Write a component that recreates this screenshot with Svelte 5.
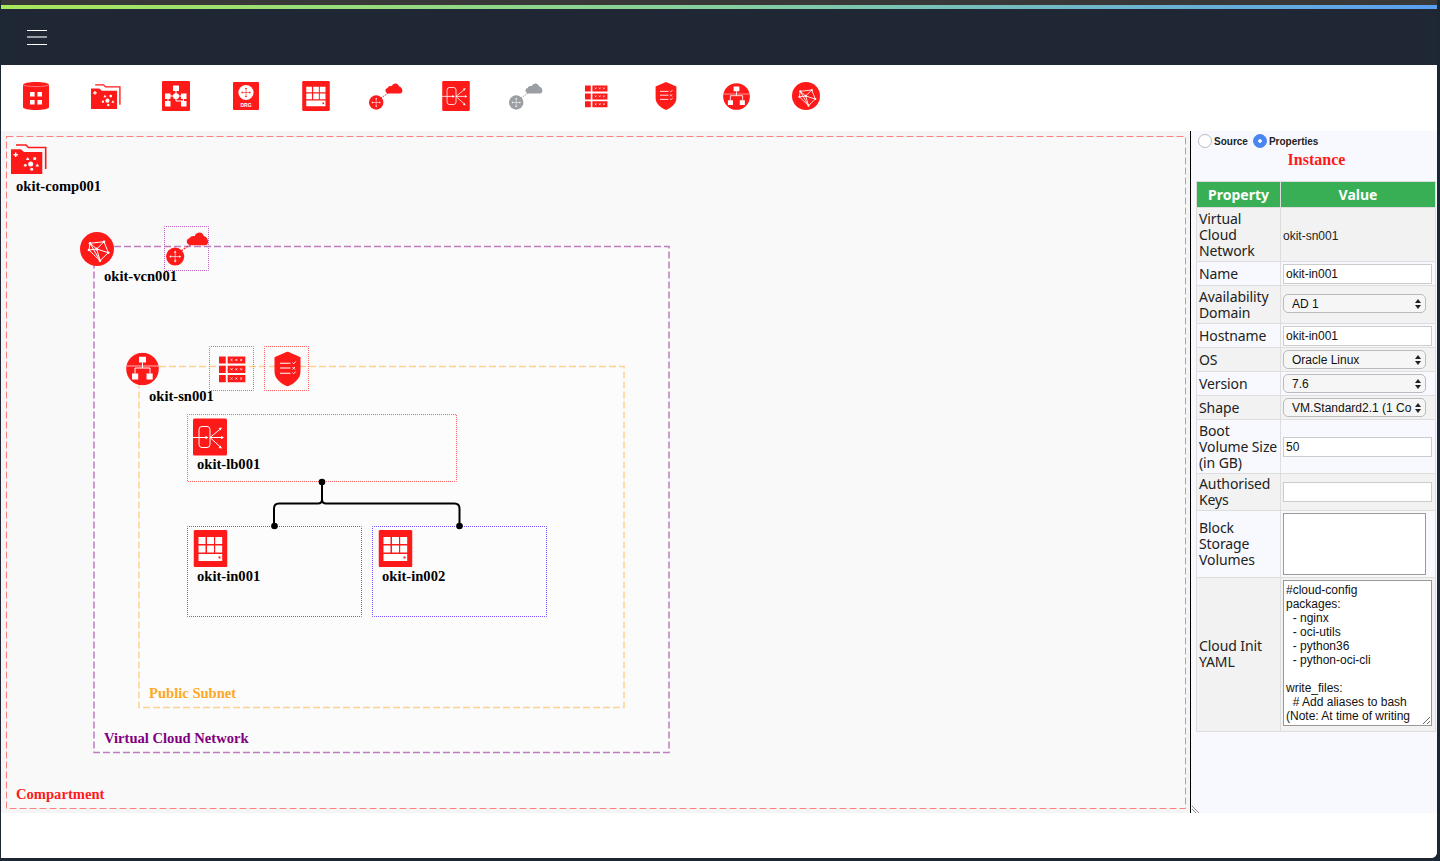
<script>
  // component palette, left to right
  const palette = [
    { id: 'db', w: 26, h: 28 },
    { id: 'folder', w: 30, h: 25 },
    { id: 'tree', w: 28, h: 30 },
    { id: 'drg', w: 26, h: 28 },
    { id: 'inst', w: 28, h: 30 },
    { id: 'ig', w: 34, h: 27, red: true },
    { id: 'lb', w: 28, h: 30 },
    { id: 'ig', w: 34, h: 27, grey: true },
    { id: 'route', w: 23, h: 23 },
    { id: 'shield', w: 22, h: 28 },
    { id: 'sub', w: 27, h: 27 },
    { id: 'vcn', w: 28, h: 28 }
  ];

  const cloudInit = `#cloud-config
packages:
  - nginx
  - oci-utils
  - python36
  - python-oci-cli

write_files:
  # Add aliases to bash
(Note: At time of writing the aliases are not added)
  - path: /etc/profile.d/aliases.sh
    content: |`;
</script>

<svg class="defs" width="0" height="0" aria-hidden="true">
  <defs>
    <symbol id="db" viewBox="0 0 26 28">
      <path fill="#ff1a1a" d="M0 3C0 1 6 0 13 0s13 1 13 3v22c0 2-6 3-13 3S0 27 0 25z" />
      <path fill="none" stroke="#ffb0b0" stroke-width=".6" d="M0 3c3 2 23 2 26 0" />
      <path fill="#fff" d="M7 10h4.600v4.600H7zM14.400 10H19v4.600h-4.600zM7 18h4.600v4.600H7zM14.400 18H19v4.600h-4.600z" />
    </symbol>

    <symbol id="folder" viewBox="0 0 36 30">
      <path fill="none" stroke="#ff1a1a" stroke-width="1.600" d="M5 1h10l2.500 2.500h17.200V25" />
      <path fill="#ff1a1a" d="M0 5.300h10L13 8h18.300v22H0z" />
      <path fill="#fff" d="M4 8.500h1.400V10h1.500v1.400H5.400v1.500H4v-1.500H2.500V10H4z" />
      <path fill="#fff" d="M16.700 13l1.800 3h-3.600zM26.300 19.500l1.800 3h-3.600z" />
      <circle fill="#fff" cx="23.700" cy="14.500" r="1.600" />
      <circle fill="#fff" cx="19.700" cy="20" r="2.500" />
      <circle fill="#fff" cx="14.300" cy="21.300" r="1.400" />
      <circle fill="#fff" cx="20.700" cy="25.300" r="1.500" />
    </symbol>

    <symbol id="tree" viewBox="0 0 28 30">
      <rect fill="#ff1a1a" width="28" height="30" rx="1" />
      <path fill="none" stroke="#fff" stroke-width="1" d="M14 7v8M6 15h16M6 15v8M21.500 15v8M14 15v5h7.500" />
      <path fill="#fff" d="M11 4.500h6v5.500h-6zM3 12.500h5.500v5.500H3zM19 12.500h5.500v5.500H19zM3 20h5.500v5.500H3zM19 20h5.500v5.500H19z" />
      <circle fill="#fff" cx="14" cy="15.200" r="3" />
    </symbol>

    <symbol id="drg" viewBox="0 0 26 28">
      <rect fill="#ff1a1a" width="26" height="28" rx="1" />
      <circle fill="#fff" cx="13" cy="10.500" r="7.600" />
      <path fill="none" stroke="#ff1a1a" stroke-width=".6" d="M13 6.500v8M9 10.500h8" />
      <path fill="#ff1a1a" d="M13 5.500l1.200 1.600h-2.400zM13 15.500l1.200-1.600h-2.400zM8 10.500l1.600-1.200v2.400zM18 10.500l-1.600-1.200v2.400z" />
      <text x="13" y="25" text-anchor="middle" fill="#fff" font-size="5" font-weight="700" font-family="Liberation Sans, sans-serif">DRG</text>
    </symbol>

    <symbol id="inst" viewBox="0 0 34 37">
      <rect fill="#ff1a1a" width="34" height="37" rx="1.500" />
      <path fill="#fff" d="M5 7h7v7H5zM13.500 7h7v7h-7zM21.700 7h7v7h-7zM5 15.500h7v7H5zM13.500 15.500h7v7h-7zM21.700 15.500h7v7h-7zM5 24h23.700v7H5z" />
      <rect fill="#ff1a1a" x="25" y="26.500" width="2" height="2" />
    </symbol>

    <symbol id="ig" viewBox="0 0 34 27">
      <circle fill="currentColor" cx="7.200" cy="19.500" r="7.200" />
      <path fill="currentColor" d="M19.500 10.500C16 10.500 15.200 5.800 18.600 5 19.400 3.200 21.400 2.800 22.600 3.300 24 -.2 28.700-.8 30 3.200 33.800 4 34.800 10.500 30.800 10.500Z" />
      <path fill="none" stroke="currentColor" stroke-width="1" stroke-dasharray="1.500 1" d="M12 15l8-5.500" />
      <path fill="none" stroke="#fff" stroke-width=".5" d="M7.200 15.700v7.600M3.400 19.500h7.600" />
      <path fill="#fff" d="M7.200 14.800l1.100 1.500H6.100zM7.200 24.200l1.100-1.500H6.100zM2.500 19.500l1.500-1.100v2.200zM11.900 19.500l-1.500-1.100v2.200z" />
    </symbol>

    <symbol id="lb" viewBox="0 0 34 37">
      <rect fill="#ff1a1a" width="34" height="37" rx="1.500" />
      <rect fill="none" stroke="#fff" x="6" y="8" width="11" height="21" rx="3" />
      <path fill="none" stroke="#fff" d="M0 19h15M17 19l11-9M17 19h12M17 19l11 10" />
      <path fill="#fff" d="M15.500 19l-3-1.700v3.400zM31 19l-3-1.700v3.400zM29 9l-3.500 .5 2 2.500zM29 30l-3.500-.5 2-2.500z" />
    </symbol>

    <symbol id="route" viewBox="0 0 28 27">
      <g fill="#ff1a1a">
        <path d="M0 0h7v7.300H0zM0 9.700h7V17H0zM0 19.300h7v7.300H0z" />
        <path d="M9 0h18.300v7.300H9zM9 9.700h18.300V17H9zM9 19.300h18.300v7.300H9z" />
      </g>
      <g fill="none" stroke="#fff" stroke-width=".8">
        <path d="M12 2.600l2 2m0-2l-2 2M17 2.600l2 2m0-2l-2 2M22 2.600l2 2m0-2l-2 2" />
        <path d="M12 12.300l2 2m0-2l-2 2M17 12.300l2 2m0-2l-2 2M22 12.300l2 2m0-2l-2 2" />
        <path d="M12 21.900l2 2m0-2l-2 2M17 21.900l2 2m0-2l-2 2M22 21.900l2 2m0-2l-2 2" />
      </g>
    </symbol>

    <symbol id="shield" viewBox="0 0 27 35">
      <path fill="#ff1a1a" d="M13.500 0l13 5.700V20c0 7-6 12-13 15C6.500 32 .5 27 .5 20V5.700z" />
      <path fill="none" stroke="#fff" stroke-width="1.100" d="M6 11.700h10.500M6 16.500h10.500M6 21.700h10.500" />
      <path fill="none" stroke="#fff" stroke-width=".9" d="M18.500 11l1.200 1.300 2-2.300M18.500 15.500l2.500 2.500m0-2.500l-2.500 2.500M18.500 21l1.200 1.300 2-2.300" />
    </symbol>

    <symbol id="sub" viewBox="0 0 33 33">
      <circle fill="#ff1a1a" cx="16.500" cy="16.500" r="16.300" />
      <path fill="none" stroke="#ffb0b0" stroke-width="1" d="M.4 13.500h32.200" />
      <path fill="none" stroke="#fff" stroke-width="1" d="M16.500 10v5.500M9 15.500h15M9 15.500V21M24 15.500V21" />
      <path fill="#fff" d="M13 4.300h7V10h-7zM6 21h6.200v6H6zM20.500 21h6.200v6h-6.200z" />
    </symbol>

    <symbol id="vcn" viewBox="0 0 34 34">
      <circle fill="#ff1a1a" cx="17" cy="17" r="17" />
      <path fill="none" stroke="#fff" stroke-width="1" d="M10 11.300L24 9.700l4.300 11L20 28.700 9 18zM10 11.300l6.700 5.700L24 9.700M16.700 17l11.600 3.700M16.700 17l3.300 11.700M16.700 17L9 18M10 11.300l10 17.400" />
      <g fill="#fff">
        <circle cx="10" cy="11.300" r="1.300" />
        <circle cx="24" cy="9.700" r="1.300" />
        <circle cx="28.300" cy="20.700" r="1.300" />
        <circle cx="20" cy="28.700" r="1.300" />
        <circle cx="9" cy="18" r="1.300" />
        <circle cx="16.700" cy="17" r="1.500" />
      </g>
    </symbol>
  </defs>
</svg>

<div class="window">
  <div class="strip"></div>
  <div class="rainbow"></div>
  <header class="topbar">
    <button class="burger" aria-label="Menu"><span></span><span class="mid"></span><span></span></button>
  </header>

  <div class="palette">
    {#each palette as item}
      <div class="tool" class:red={item.red} class:grey={item.grey}>
        <svg width={item.w} height={item.h}><use href={'#' + item.id} /></svg>
      </div>
    {/each}
  </div>

  <main class="main">
    <div class="canvas">
      <svg class="diagram" width="1189" height="682" viewBox="1 131 1189 682">
        <rect class="comp" x="6.500" y="136.500" width="1179" height="672" />
        <rect class="net" x="94" y="246.500" width="575" height="506" />
        <rect class="subnet" x="139" y="366.500" width="485" height="341" />

        <rect class="dot-red" x="187.500" y="414.500" width="269" height="67" />
        <rect class="dot-blue" x="187.500" y="526.500" width="174" height="90" />
        <rect class="dot-blue" x="372.500" y="526.500" width="174" height="90" />
        <rect class="dot-purple" x="164.500" y="226.500" width="44" height="44" />
        <rect class="dot-red" x="209.500" y="346.500" width="44" height="44" />
        <rect class="dot-red" x="264.500" y="346.500" width="44" height="44" />

        <path class="wire" d="M322 482V499.500q0 4-4 4H279q-5 0-5 5V526M322 499.500q0 4 4 4H454.500q5 0 5 5V526" />
        <circle cx="322" cy="482" r="3.300" />
        <circle cx="274.500" cy="526" r="3.300" />
        <circle cx="459.500" cy="526" r="3.300" />

        <use href="#folder" x="11" y="144" width="36" height="30" />
        <use href="#vcn" x="80" y="232" width="34" height="34" />
        <use href="#ig" class="ig" x="166" y="232" width="43" height="34" />
        <use href="#sub" x="126" y="352.500" width="33" height="33" />
        <use href="#route" x="219" y="356" width="27" height="27" />
        <use href="#shield" x="274" y="351.500" width="27" height="35" />
        <use href="#lb" x="193" y="418" width="34" height="38" />
        <use href="#inst" x="193.500" y="530" width="34" height="37" />
        <use href="#inst" x="378.500" y="530" width="34" height="37" />

        <text x="16" y="191">okit-comp001</text>
        <text x="104" y="281">okit-vcn001</text>
        <text x="149" y="401">okit-sn001</text>
        <text x="197" y="469">okit-lb001</text>
        <text x="197" y="581">okit-in001</text>
        <text x="382" y="581">okit-in002</text>
        <text x="149" y="698" class="orange">Public Subnet</text>
        <text x="104" y="743" class="purple">Virtual Cloud Network</text>
        <text x="16" y="799" class="redtext">Compartment</text>
      </svg>
    </div>

    <aside class="panel">
      <div class="radios">
        <label><input type="radio" name="view" /> Source</label>
        <label><input type="radio" name="view" checked /> Properties</label>
      </div>
      <h3>Instance</h3>

      <table>
        <thead>
          <tr class="h-head"><th>Property</th><th>Value</th></tr>
        </thead>
        <tbody>
          <tr class="h-54"><td class="k">Virtual Cloud Network</td><td class="plain">okit-sn001</td></tr>
          <tr class="h-24"><td class="k">Name</td><td><input value="okit-in001" /></td></tr>
          <tr class="h-38"><td class="k">Availability Domain</td><td class="lift"><div class="sel"><select><option>AD 1</option></select>{@render carets()}</div></td></tr>
          <tr class="h-24"><td class="k">Hostname</td><td><input value="okit-in001" /></td></tr>
          <tr class="h-24"><td class="k">OS</td><td><div class="sel"><select><option>Oracle Linux</option></select>{@render carets()}</div></td></tr>
          <tr class="h-24"><td class="k">Version</td><td><div class="sel"><select><option>7.6</option></select>{@render carets()}</div></td></tr>
          <tr class="h-24"><td class="k">Shape</td><td><div class="sel"><select><option>VM.Standard2.1 (1 Core)</option></select>{@render carets()}</div></td></tr>
          <tr class="h-54"><td class="k">Boot Volume Size (in GB)</td><td><input value="50" /></td></tr>
          <tr class="h-37"><td class="k">Authorised Keys</td><td><input value="" /></td></tr>
          <tr class="h-67"><td class="k">Block Storage Volumes</td><td><textarea class="block"></textarea></td></tr>
          <tr class="h-154"><td class="k pull">Cloud Init YAML</td><td class="yaml-cell"><textarea class="yaml" value={cloudInit}></textarea></td></tr>
        </tbody>
      </table>

      <svg class="grip" width="8" height="8"><path d="M0 1l7 7M0 4l4 4" fill="none" stroke="#777" stroke-width=".8" /></svg>
    </aside>
  </main>

  <div class="footer"></div>
</div>

{#snippet carets()}
  <svg class="carets" width="6" height="10"><path d="M3 0l3 4H0zM3 10L0 6h6z" fill="#222" /></svg>
{/snippet}

<style>
  :global(body) {
    background: #1c2733;
    height: 861px;
    overflow: hidden;
  }

  .defs {
    position: absolute;
  }

  .window {
    width: 1436px;
    height: 858px;
    margin-left: 1px;
    background: #fff;
    border-bottom-right-radius: 6px;
    overflow: hidden;
    display: flex;
    flex-direction: column;
  }

  .strip {
    height: 5px;
    background: #383838;
    flex: none;
  }

  .rainbow {
    height: 4px;
    flex: none;
    background: linear-gradient(90deg, #a8e85a, #85cf9f 50%, #5a9ff0);
  }

  .topbar {
    height: 56px;
    flex: none;
    background: #1f2735;
    display: flex;
    align-items: center;
    padding-left: 26px;
  }

  .burger {
    width: 20px;
    height: 15px;
    padding: 0;
    border: 0;
    background: none;
    display: flex;
    flex-direction: column;
    justify-content: space-between;
  }

  .burger span {
    display: block;
    height: 1px;
    background: #fff;
  }

  .burger .mid {
    background: #9a9da3;
    height: 2px;
  }

  .palette {
    height: 66px;
    flex: none;
    display: flex;
    padding-bottom: 4px;
    box-sizing: border-box;
    color: #ff1a1a;
  }

  .tool {
    width: 70px;
    display: flex;
    align-items: center;
    justify-content: center;
  }

  .tool.grey {
    color: #9b9ea2;
  }

  .main {
    height: 682px;
    flex: none;
    display: flex;
  }

  .canvas {
    width: 1189px;
    flex: none;
    background: #f5f5f5;
    border-right: 1px solid #000;
  }

  .diagram {
    display: block;
    color: #ff1a1a;
  }

  .diagram text {
    font: bold 14.600px "Liberation Serif", serif;
    fill: #000;
  }

  .diagram text.orange {
    fill: #ffa726;
  }

  .diagram text.purple {
    fill: #800080;
  }

  .diagram text.redtext {
    fill: #ff1a1a;
  }

  .comp,
  .net,
  .subnet {
    fill: #fff;
    fill-opacity: 0.4;
  }

  .comp {
    stroke: #ff8080;
    stroke-width: 1;
    stroke-dasharray: 7 3;
  }

  .net {
    stroke: #c07cc0;
    stroke-width: 1.500;
    stroke-dasharray: 7 3;
  }

  .subnet {
    stroke: #ffd38f;
    stroke-width: 1.500;
    stroke-dasharray: 7 3;
  }

  .dot-red,
  .dot-blue,
  .dot-purple {
    fill: none;
    stroke-width: 1;
    stroke-dasharray: 1 1;
    stroke-dashoffset: 0.500;
  }

  .dot-red {
    stroke: #ff6060;
  }

  .dot-blue {
    stroke: #7a55ff;
  }

  .dot-purple {
    stroke: #c060c0;
  }

  .wire {
    fill: none;
    stroke: #000;
    stroke-width: 2;
  }

  .panel {
    position: relative;
    flex: 1;
    background: #f7f9fe;
    padding: 0 0 0 5px;
    box-sizing: border-box;
    font-family: "Liberation Sans", Arial, sans-serif;
  }

  .radios {
    display: flex;
    gap: 5px;
    height: 20px;
    align-items: center;
    padding-left: 2px;
    font-size: 10px;
    font-weight: bold;
    color: #222;
  }

  .radios label {
    display: flex;
    align-items: center;
    gap: 2px;
  }

  .radios input {
    appearance: none;
    width: 14px;
    height: 14px;
    margin: 0;
    border: 1px solid #bbb;
    border-radius: 50%;
    background: #fff;
  }

  .radios input:checked {
    border-color: #4a86f0;
    background: radial-gradient(circle, #fff 0 1.500px, #4a86f0 2px);
  }

  h3 {
    margin: 0;
    height: 30px;
    text-align: center;
    color: #ff1a1a;
    font: bold 16px/18px "Liberation Serif", serif;
  }

  table {
    width: 240px;
    border-collapse: collapse;
    table-layout: fixed;
    font-size: 12px;
  }

  th {
    background: #38af55;
    color: #fff;
    font: bold 14px "Noto Sans", sans-serif;
    border: 1px solid #ddd;
  }

  th:first-child {
    width: 81px;
  }

  td {
    border: 1px solid #ddd;
    padding: 0 2px;
  }

  tbody tr:nth-child(odd) {
    background: #f2f2f2;
  }

  td.k {
    font: 14px/16px "Noto Sans", sans-serif;
    letter-spacing: -0.1px;
    color: #222;
  }

  td.k.pull {
    padding-bottom: 2px;
  }

  td.yaml-cell {
    padding-bottom: 4px;
  }

  td.lift {
    padding-bottom: 2px;
  }

  td.plain {
    font-size: 12px;
    color: #222;
    padding-top: 2px;
  }

  .h-head { height: 26px; }
  .h-24 { height: 24px; }
  .h-37 { height: 37px; }
  .h-38 { height: 38px; }
  .h-54 { height: 54px; }
  .h-67 { height: 67px; }
  .h-154 { height: 154px; }

  input:not([type]) {
    display: block;
    width: 149px;
    height: 20px;
    box-sizing: border-box;
    padding: 0 2px;
    border: 1px solid #ccc;
    font: 12px "Liberation Sans", sans-serif;
    color: #111;
    background: #fff;
    outline: 0;
  }

  .sel {
    position: relative;
    width: 143px;
  }

  select {
    appearance: none;
    display: block;
    width: 143px;
    height: 19px;
    box-sizing: border-box;
    padding: 0 13px 0 8px;
    border: 1px solid #bbb;
    border-radius: 5px;
    background: #f6f6f6;
    font: 12px "Liberation Sans", sans-serif;
    color: #111;
  }

  .carets {
    position: absolute;
    right: 5px;
    top: 4.500px;
  }

  textarea {
    display: block;
    box-sizing: border-box;
    margin: 0;
    padding: 2px;
    border: 1px solid #999;
    background: #fff;
    font: 12px/14px "Liberation Sans", sans-serif;
    color: #111;
    overflow: hidden;
    outline: 0;
  }

  textarea.block {
    width: 143px;
    height: 62px;
    resize: none;
  }

  textarea.yaml {
    width: 149px;
    height: 146px;
    resize: both;
  }

  .grip {
    position: absolute;
    left: 1px;
    bottom: 0;
  }

  .footer {
    flex: 1;
    background: #fff;
  }
</style>
